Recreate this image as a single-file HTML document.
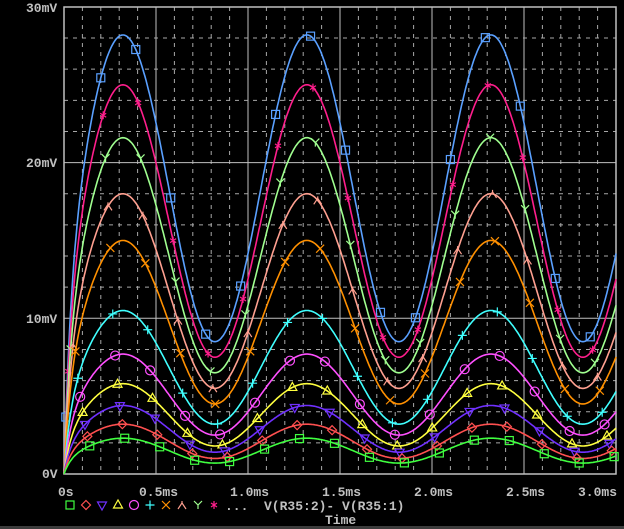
<!DOCTYPE html>
<html><head><style>
html,body{margin:0;padding:0;background:#000;width:624px;height:529px;overflow:hidden}
svg{display:block}
text{font-family:"Liberation Mono","DejaVu Sans Mono",monospace;font-weight:bold;fill:#c0c0c0;font-size:13px}
</style></head><body>
<svg id="s" width="624" height="529" xmlns="http://www.w3.org/2000/svg">
<rect x="0" y="526" width="624" height="3" fill="#3c3c3c"/>
<g id="grid"></g>
<g id="curves"></g>
<text x="26" y="12">30mV</text>
<text x="26" y="167">20mV</text>
<text x="26" y="323">10mV</text>
<text x="42" y="478">0V</text>
<text x="58" y="496">0s</text>
<text x="139" y="496">0.5ms</text>
<text x="230" y="496">1.0ms</text>
<text x="322" y="496">1.5ms</text>
<text x="414" y="496">2.0ms</text>
<text x="506" y="496">2.5ms</text>
<text x="578" y="496">3.0ms</text>
<text x="225" y="510" xml:space="preserve">...  V(R35:2)- V(R35:1)</text>
<text x="325" y="524">Time</text>
<g id="leg"></g>
</svg>
<script>
var NS="http://www.w3.org/2000/svg";
function el(p,t,a){var e=document.createElementNS(NS,t);for(var k in a)e.setAttribute(k,a[k]);p.appendChild(e);return e;}
var L=64,R=616,T=7,B=474;
function X(t){return L+184*t;}function Y(v){return B-v*15.57;}
var g=document.getElementById('grid');
for(var i=1;i<30;i++){var x=X(i*0.1);if(i%5==0)el(g,'line',{x1:x,y1:T,x2:x,y2:B,stroke:'#c0c0c0','stroke-width':1});
else el(g,'line',{x1:x,y1:T,x2:x,y2:B,stroke:'#a8a8a8','stroke-width':1,'stroke-dasharray':'4,5'});}
for(var i=1;i<15;i++){var y=Y(i*2);if(i%5==0)el(g,'line',{x1:L,y1:y,x2:R,y2:y,stroke:'#c0c0c0','stroke-width':1});
else el(g,'line',{x1:L,y1:y,x2:R,y2:y,stroke:'#a8a8a8','stroke-width':1,'stroke-dasharray':'4,5'});}
el(g,'rect',{x:L,y:T,width:R-L,height:B-T,fill:'none',stroke:'#c0c0c0','stroke-width':1.5});
var C=[['#5aa0ff',28.2,8.5,'sq'],['#ff1e8c',25,7.5,'st'],['#a0ff90',21.6,6.5,'Y'],['#ffa090',18,5.5,'la'],['#ff9000',15,4.5,'x'],['#40ffff',10.5,3.2,'+'],['#ff50ff',7.7,2.5,'o'],['#ffff40',5.8,1.8,'tri'],['#7030ff',4.4,1.4,'v'],['#ff5050',3.2,1.0,'d'],['#40ff40',2.3,0.7,'sq']];
var cg=document.getElementById('curves');
function mk(p,type,x,y,c){var a={fill:'none',stroke:c,'stroke-width':1.2};
if(type=='sq')el(p,'rect',Object.assign({x:x-4,y:y-4,width:8,height:8},a));
else if(type=='d')el(p,'path',Object.assign({d:'M'+x+' '+(y-4.5)+'l4.5 4.5l-4.5 4.5l-4.5 -4.5z'},a));
else if(type=='v')el(p,'path',Object.assign({d:'M'+(x-4.5)+' '+(y-3)+'h9l-4.5 8z'},a));
else if(type=='tri')el(p,'path',Object.assign({d:'M'+(x-4.5)+' '+(y+3)+'h9l-4.5 -8z'},a));
else if(type=='o')el(p,'circle',Object.assign({cx:x,cy:y,r:4.5},a));
else if(type=='+')el(p,'path',Object.assign({d:'M'+(x-4.5)+' '+y+'h9M'+x+' '+(y-4.5)+'v9'},a));
else if(type=='x')el(p,'path',Object.assign({d:'M'+(x-4)+' '+(y-4)+'l8 8M'+(x+4)+' '+(y-4)+'l-8 8'},a));
else if(type=='la')el(p,'path',Object.assign({d:'M'+x+' '+(y-4)+'v2l-4 6M'+x+' '+(y-2)+'l4 6'},a));
else if(type=='Y')el(p,'path',Object.assign({d:'M'+(x-4)+' '+(y-4)+'l4 4l4 -4M'+x+' '+y+'v4'},a));
else if(type=='st')el(p,'path',Object.assign({d:'M'+x+' '+(y-4)+'v8M'+(x-3)+' '+(y-2)+'l6 4M'+(x+3)+' '+(y-2)+'l-6 4'},a));}
C.forEach(function(c,k){var cc=(c[1]+c[2])/2,a=(c[1]-c[2])/2;
function f(t){return (cc+a*Math.sin(2*Math.PI*(t-0.07)))*(1-Math.exp(-t/0.035));}
var d='';for(var t=0;t<=3.0;t+=0.005){d+=(t==0?'M':'L')+X(t).toFixed(1)+' '+Y(f(t)).toFixed(1);}
el(cg,'path',{d:d,fill:'none',stroke:c[0],'stroke-width':1.6});
for(var t=0.01+k*0.013;t<3.0;t+=0.19){mk(cg,c[3],X(t),Y(f(t)),c[0]);}});
var lg=document.getElementById('leg');var order=[10,9,8,7,6,5,4,3,2,1];var lx=70;
order.forEach(function(i){mk(lg,C[i][3],lx,505,C[i][0]);lx+=16;});
</script>
</body></html>
